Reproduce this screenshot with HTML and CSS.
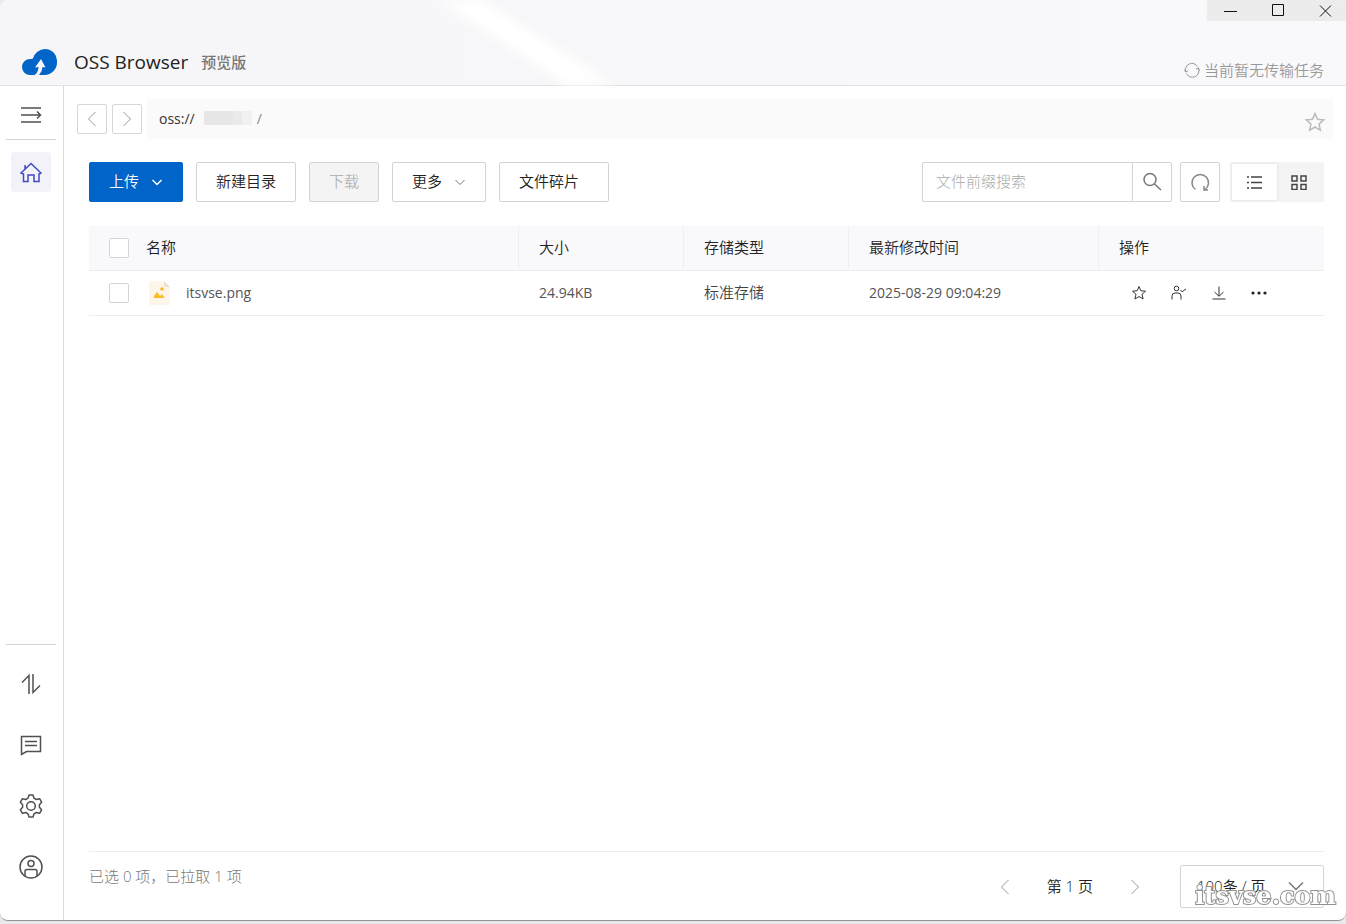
FILE: index.html
```html
<!DOCTYPE html>
<html lang="zh-CN">
<head>
<meta charset="utf-8">
<title>OSS Browser</title>
<link rel="stylesheet" href="styles.css">
</head>
<body>
<div class="window">
  <header class="header">
    <svg class="beam" viewBox="0 0 240 86" preserveAspectRatio="none" aria-hidden="true"><path d="M2 -8L52 -8Q130 36 230 92L174 92Q90 44 2 -8Z" fill="#fff"/></svg>
    <div class="brand">
      <svg class="logo" viewBox="0 0 36 28" aria-hidden="true"><path d="M8 27A8 8 0 0 1 8 11Q9.500 11 11 10.500A12.500 12.500 0 0 1 23 1A12 12 0 0 1 35 14A12.500 12.500 0 0 1 22 27H17Q20.500 23 20.500 19L23.500 19.500L19 11L13 19.500L16.500 19Q16.500 24 12.500 27Z" fill="#0064c8"/></svg>
      <h1 class="title">OSS Browser</h1>
      <span class="tag">预览版</span>
    </div>
    <div class="header-side">
      <div class="controls">
        <button class="control" aria-label="最小化"><svg width="14" height="14" viewBox="0 0 14 14"><path d="M0 8.500H13"/></svg></button>
        <button class="control" aria-label="最大化"><svg width="14" height="14" viewBox="0 0 14 14"><path d="M1.500 1.500H12.500V12.500H1.500Z"/></svg></button>
        <button class="control" aria-label="关闭"><svg width="14" height="14" viewBox="0 0 14 14"><path d="M2 2.500L13 13.500M13 2.500L2 13.500"/></svg></button>
      </div>
      <div class="status">
        <svg width="16" height="16" viewBox="0 0 16 16"><path d="M1.800 10A6.500 6.500 0 0 1 13.500 4.500M14.300 6A6.500 6.500 0 0 1 2.500 11.500M0.500 7.500L1.500 10L4 9M12 7L14.500 6L15.500 8.500"/></svg>
        <span>当前暂无传输任务</span>
      </div>
    </div>
  </header>
  <div class="body">
    <nav class="sidebar" aria-label="主导航">
      <div class="side-head">
        <button class="side-btn" aria-label="展开"><svg width="22" height="18" viewBox="0 0 22 18"><path d="M1 2H21M1 9H20M1 16H21M17 5.500L20.500 9L17 12.500"/></svg></button>
      </div>
      <a class="side-btn active" href="#" aria-label="首页"><svg width="22" height="22" viewBox="0 0 22 22"><path d="M1 12L11 2.500L21 12L19 13V20.500H14V14H8V20.500H3.500V13ZM5 8V4"/></svg></a>
      <div class="side-foot">
        <button class="side-btn" aria-label="传输列表"><svg width="22" height="22" viewBox="0 0 22 22"><path d="M2 9.500L9 2.500V21M13 1V19.500L20 12.500"/></svg></button>
        <button class="side-btn" aria-label="反馈"><svg width="22" height="22" viewBox="0 0 22 22"><path d="M1.500 2.500H20.500V17.500H6.500L1.500 20.500ZM5 7.500H17M5 11.500H17"/></svg></button>
        <button class="side-btn" aria-label="设置"><svg width="24" height="24" viewBox="0 0 24 24"><path stroke-linejoin="round" d="M10 1H14L15 4.200L17.300 5.500L20.600 4.700L22.600 8.200L20.400 10.700V13.300L22.600 15.800L20.600 19.300L17.300 18.500L15 19.800L14 23H10L9 19.800L6.700 18.500L3.400 19.300L1.400 15.800L3.600 13.300V10.700L1.400 8.200L3.400 4.700L6.700 5.500L9 4.200Z"/><circle cx="12" cy="12" r="4.300"/></svg></button>
        <button class="side-btn" aria-label="账号"><svg width="24" height="24" viewBox="0 0 24 24"><circle cx="12" cy="12" r="11"/><circle cx="12" cy="8.500" r="3"/><path d="M6 21V16.500Q6 14.500 8 14.500H16Q18 14.500 18 16.500V21"/></svg></button>
      </div>
    </nav>
    <main class="main">
      <div class="location">
        <button class="nav-btn" aria-label="后退"><svg width="16" height="16" viewBox="0 0 16 16"><path d="M11.500 1L4.500 8L11.500 15"/></svg></button>
        <button class="nav-btn" aria-label="前进"><svg width="16" height="16" viewBox="0 0 16 16"><path d="M4.500 1L11.500 8L4.500 15"/></svg></button>
        <div class="path">
          <span>oss://</span><span class="bucket"></span><span class="slash">/</span>
          <button class="path-star" aria-label="收藏"><svg width="20" height="20" viewBox="0 0 20 20"><path d="M10 1.500L12.500 7.300L18.800 7.900L14 12.100L15.400 18.300L10 15L4.600 18.300L6 12.100L1.200 7.900L7.500 7.300Z"/></svg></button>
        </div>
      </div>
      <div class="content">
        <div class="toolbar">
          <button class="btn primary">上传<svg width="12" height="12" viewBox="0 0 12 12"><path d="M1.500 4L6 8.500L10.500 4"/></svg></button>
          <button class="btn">新建目录</button>
          <button class="btn" disabled>下载</button>
          <button class="btn">更多<svg width="12" height="12" viewBox="0 0 12 12"><path d="M1.500 4L6 8.500L10.500 4"/></svg></button>
          <button class="btn fragment">文件碎片</button>
          <div class="search">
            <input class="search-input" type="text" placeholder="文件前缀搜索" aria-label="文件前缀搜索">
            <button class="search-btn" aria-label="搜索"><svg width="20" height="20" viewBox="0 0 20 20"><circle cx="8" cy="7.500" r="6"/><path d="M12.500 12L19 18"/></svg></button>
          </div>
          <button class="refresh" aria-label="刷新"><svg width="20" height="20" viewBox="0 0 20 20"><path d="M5.500 17.500A8.300 8.300 0 1 1 15 17.500M14 14V18H18"/></svg></button>
          <div class="views">
            <button class="view on" aria-label="列表"><svg width="16" height="14" viewBox="0 0 16 14"><path d="M5 2H16M5 7.500H16M5 13H16M1 2H3M1 7.500H3M1 13H3"/></svg></button>
            <button class="view" aria-label="网格"><svg width="16" height="16" viewBox="0 0 16 16"><path d="M1 2H6V7H1ZM10 2H15V7H10ZM1 10.500H6V15.500H1ZM10 10.500H15V15.500H10Z"/></svg></button>
          </div>
        </div>
        <table class="files">
          <colgroup><col><col class="c-size"><col class="c-type"><col class="c-time"><col class="c-act"></colgroup>
          <thead>
            <tr><th><div class="name"><input class="check" type="checkbox" aria-label="全选"><span class="head-name">名称</span></div></th><th>大小</th><th>存储类型</th><th>最新修改时间</th><th>操作</th></tr>
          </thead>
          <tbody>
            <tr>
              <td><div class="name"><input class="check" type="checkbox" aria-label="选择 itsvse.png"><svg class="file-icon" width="22" height="26" viewBox="0 0 22 26"><path d="M0 1H15L21 7V25H0Z" fill="#fdf5ea"/><path d="M15 1L21 7H15Z" fill="#eee0ce"/><path d="M5 18V16L8 12L11 16L13 14L15.500 18Z" fill="#f5bd22"/><circle cx="13" cy="9" r="1.800" fill="#f5bd22"/></svg><span>itsvse.png</span></div></td>
              <td>24.94KB</td><td>标准存储</td><td>2025-08-29 09:04:29</td>
              <td><div class="actions">
                <button class="act" aria-label="收藏"><svg width="16" height="16" viewBox="0 0 16 16"><path d="M8 1.500L9.900 5.800L14.500 6.200L11 9.300L12.100 14L8 11.500L3.900 14L5 9.300L1.500 6.200L6.100 5.800Z"/></svg></button>
                <button class="act" aria-label="授权"><svg width="16" height="16" viewBox="0 0 16 16"><circle cx="5.500" cy="3.500" r="2.300"/><path d="M1 14.500V11Q1 8 4 8H7Q10 8 10 11V14.500M9.500 5L11 6.800L15 4"/></svg></button>
                <button class="act" aria-label="下载"><svg width="16" height="16" viewBox="0 0 16 16"><path d="M8 1.500V11M3.500 7L8 11.300L12.500 7M1.500 14H14.500"/></svg></button>
                <button class="act dots" aria-label="更多操作"><svg width="16" height="16" viewBox="0 0 16 16"><circle cx="2" cy="8" r="1.600"/><circle cx="8" cy="8" r="1.600"/><circle cx="14" cy="8" r="1.600"/></svg></button>
              </div></td>
            </tr>
          </tbody>
        </table>
        <footer class="footer">
          <span class="summary">已选 0 项，已拉取 1 项</span>
          <div class="pager">
            <button class="page-btn" aria-label="上一页"><svg width="16" height="16" viewBox="0 0 16 16"><path d="M11.500 1L4.500 8L11.500 15"/></svg></button>
            <span class="page-now">第 1 页</span>
            <button class="page-btn" aria-label="下一页"><svg width="16" height="16" viewBox="0 0 16 16"><path d="M4.500 1L11.500 8L4.500 15"/></svg></button>
            <div class="size-box">
              <select class="page-size" aria-label="每页条数"><option>100条 / 页</option></select>
              <svg class="size-arrow" width="16" height="16" viewBox="0 0 16 16"><path d="M1 4.500L8 11.500L15 4.500"/></svg>
            </div>
          </div>
        </footer>
      </div>
    </main>
  </div>
</div>
<div class="watermark">itsvse.com</div>
</body>
</html>
```

FILE: styles.css
```css
* { box-sizing: border-box; }

body {
  margin: 0;
  height: 100vh;
  padding-bottom: 3px;
  background: #e9e9eb;
  color: #222;
  font: 300 15px/20px "Open Sans", "Noto Sans CJK SC", sans-serif;
  overflow: hidden;
}

button, input, select { font: inherit; color: inherit; }
button { padding: 0; border: 0; background: none; }
svg { display: block; flex: none; fill: none; stroke: currentColor; }

.window {
  display: flex;
  flex-direction: column;
  height: 100%;
  background: #fff;
  border-bottom: 1px solid #929292;
  border-radius: 8px;
  overflow: hidden;
}

.header {
  position: relative;
  display: flex;
  justify-content: space-between;
  height: 86px;
  flex: none;
  background: linear-gradient(90deg, #f6f6f8, #f9f9fc);
  border-bottom: 1px solid #e3e3e5;
}
.beam {
  position: absolute;
  left: 425px;
  top: 0;
  width: 208px;
  height: 100%;
  stroke: none;
  filter: blur(6px);
}
.brand { position: relative; display: flex; align-items: center; padding: 38px 0 0 22px; }
.logo { width: 36px; height: 28px; stroke: none; margin-right: 16px; }
.title { margin: 0 13px 0 0; font-size: 19px; font-weight: 500; line-height: 28px; }
.tag { color: #777; font-size: 15px; font-weight: 500; }
.header-side { display: flex; flex-direction: column; align-items: flex-end; justify-content: space-between; }
.controls { display: flex; justify-content: space-between; width: 139px; height: 21px; padding: 0 14px 0 17px; background: #ececec; }
.control { color: #111; padding-bottom: 1px; }
.status { display: flex; align-items: center; gap: 4px; padding: 0 22px 5px 0; color: #999; font-weight: 350; }
.status svg { color: #999; }

.body { display: flex; flex: 1; min-height: 0; }
.sidebar {
  display: flex;
  flex-direction: column;
  align-items: center;
  width: 64px;
  flex: none;
  padding-right: 1px;
  border-right: 1px solid #d9d9de;
  color: #505050;
}
.side-head { display: flex; justify-content: center; width: 50px; padding: 9px 0 4px; margin-bottom: 12px; border-bottom: 1px solid #d4d4d4; }
.side-btn { display: flex; align-items: center; justify-content: center; width: 40px; height: 40px; border-radius: 4px; }
.side-btn svg { stroke-width: 1.500; }
.active { background: #f2f2f8; color: #4348c6; }
.side-foot { display: flex; flex-direction: column; align-items: center; gap: 21px; width: 50px; margin-top: auto; padding: 19px 0 33px; border-top: 1px solid #d4d4d4; }

.main { display: flex; flex-direction: column; flex: 1; min-width: 0; }
.location { display: flex; align-items: center; gap: 5px; padding: 13px 13px 0; }
.nav-btn { display: grid; place-items: center; width: 30px; height: 30px; border: 1px solid #d6d6d6; border-radius: 2px; color: #999; }
.path { display: flex; align-items: center; flex: 1; height: 40px; padding: 0 8px 0 12px; background: #fafafa; font-size: 14px; font-weight: 400; color: #333; }
.bucket { width: 48px; height: 14px; margin: 0 5px 2px 9px; background: linear-gradient(90deg, #e6e6e6 60%, #eaeaea 60%, #eaeaea 80%, #f1f1f1 80%); }
.slash { color: #888; }
.path-star { margin: 5px 0 0 auto; color: #bbb; }
.path-star svg { stroke-width: 1.500; }

.content { display: flex; flex-direction: column; flex: 1; padding: 23px 22px 0 25px; }
.toolbar { display: flex; align-items: center; gap: 13px; }
.btn {
  display: flex;
  align-items: center;
  gap: 12px;
  height: 40px;
  padding: 0 19px 2px;
  border: 1px solid #d4d4d4;
  border-radius: 2px;
  background: #fff;
  font-weight: 350;
  color: #222;
}
.btn svg { color: #777; margin-top: 2px; }
.primary { background: #0064c8; border-color: #0064c8; color: #fff; }
.primary svg { color: #fff; stroke-width: 1.500; }
.btn:disabled { background: #f4f4f4; color: #b5b5b5; }
.fragment { padding-right: 29px; }
.search { display: flex; width: 250px; height: 40px; margin-left: auto; border: 1px solid #d4d4d4; border-radius: 2px; }
.search-input { flex: 1; min-width: 0; padding: 0 13px 2px; border: 0; background: none; outline: 0; }
.search-input::placeholder { color: #aaa; opacity: 1; }
.search-btn { display: grid; place-items: center; width: 39px; border-left: 1px solid #d4d4d4; color: #777; }
.search-btn svg, .refresh svg { stroke-width: 1.500; }
.refresh { display: grid; place-items: center; width: 40px; height: 40px; margin-left: -5px; border: 1px solid #d4d4d4; border-radius: 2px; color: #888; }
.views { display: flex; width: 94px; height: 40px; padding: 2px; margin-left: -3px; background: #f4f4f4; border-radius: 2px; }
.view { display: grid; place-items: center; flex: 1; padding-right: 2px; color: #444; }
.view svg { stroke-width: 1.500; }
.on { background: #fff; box-shadow: 0 0 3px #dedede; }

.files { width: 100%; margin-top: 24px; border-collapse: separate; border-spacing: 0; table-layout: fixed; font-size: 14px; }
.c-size, .c-type { width: 165px; }
.c-time { width: 250px; }
.c-act { width: 226px; }
.files th, .files td { height: 45px; padding: 0 20px; border-bottom: 1px solid #ececef; text-align: left; }
.files th { background: #f9f9fb; font-size: 15px; font-weight: 350; }
.files th + th { padding-bottom: 2px; border-left: 1px solid #efeff2; }
.files td + td { padding-left: 21px; }
.files td { color: #555; font-weight: 400; }
.files td:nth-child(3) { padding-bottom: 2px; font-size: 15px; font-weight: 350; color: #444; }
.name { display: flex; align-items: center; }
.check { appearance: none; width: 20px; height: 20px; margin: 0; border: 1px solid #d4d4d9; border-radius: 2px; background: #fff; }
.head-name { margin-left: 17px; padding-bottom: 2px; }
.file-icon { margin: 0 15px 0 20px; stroke: none; }
.actions { display: flex; gap: 24px; padding-left: 12px; }
.act { color: #333; }
.dots svg { fill: #222; stroke: none; }

.footer { display: flex; justify-content: space-between; margin-top: auto; height: 69px; border-top: 1px solid #ececec; }
.summary { padding-top: 14px; color: #777; font-size: 15px; }
.pager { display: flex; align-items: center; height: 43px; margin-top: 13px; }
.page-btn { color: #999; }
.page-now { margin: 0 34px; padding-bottom: 1px; font-size: 15px; font-weight: 350; }
.size-box { position: relative; width: 144px; height: 43px; margin-left: 37px; }
.page-size { appearance: none; width: 100%; height: 100%; padding: 0 16px 1px; border: 1px solid #d4d4d4; border-radius: 2px; background: #fff; font-weight: 350; }
.size-arrow { position: absolute; right: 20px; top: 13px; color: #777; stroke-width: 1.500; pointer-events: none; }

.watermark {
  position: fixed;
  right: 10px;
  bottom: 14px;
  color: #fff;
  font: bold 24px/28px "DejaVu Serif", serif;
  -webkit-text-stroke: 2px #919191;
  paint-order: stroke fill;
  pointer-events: none;
}
```
